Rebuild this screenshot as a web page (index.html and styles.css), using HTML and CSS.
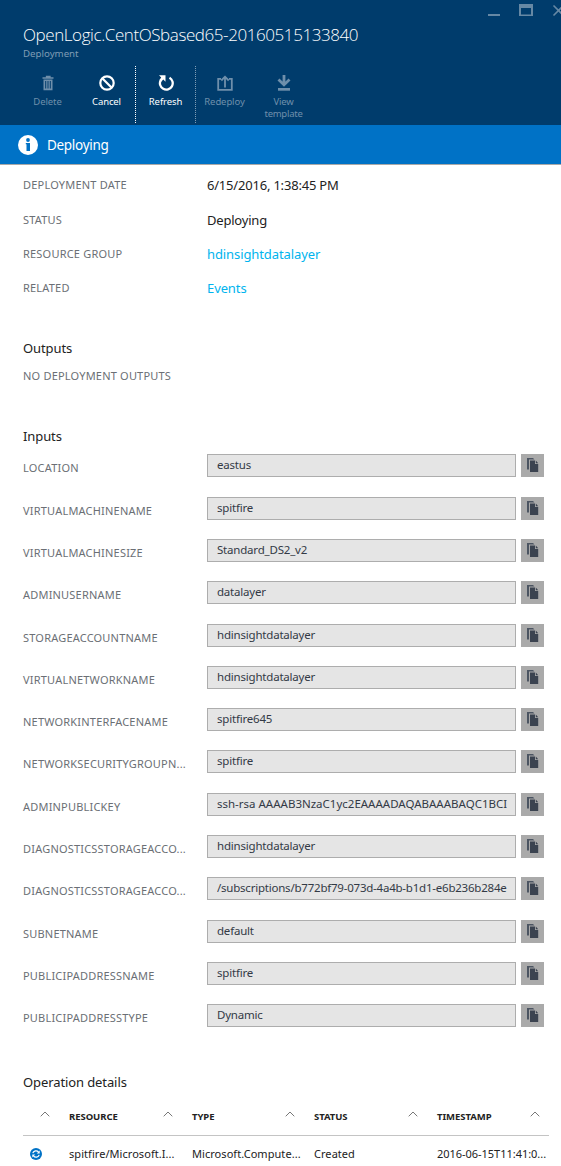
FILE: index.html
```html
<!DOCTYPE html>
<html lang="en">
<head>
<meta charset="utf-8">
<title>Deployment</title>
<link rel="stylesheet" href="styles.css">
</head>
<body>
<svg width="0" height="0" class="defs">
  <symbol id="copy" viewBox="0 0 12 14"><path fill="#4c5562" d="M0 0h6l1.500 1.500H2v10H0z"/><path fill="#3b4350" d="M3 2.500h5v3.500h3.200V14H3z"/><path fill="#3b4350" d="M8.800 2.500 11.200 5.200H8.800z"/></symbol>
  <symbol id="up" viewBox="0 0 10 6"><path d="M.7 5.300 5 1l4.300 4.300" fill="none" stroke="#777" stroke-width="1"/></symbol>
</svg>
<header class="head">
  <div class="win">
    <svg width="80" height="20" viewBox="0 0 80 20"><path d="M7 15h12" stroke="#6688a4" stroke-width="2"/><path d="M38 4h14v12H38zM40 8v6.500h10V8z" fill="#6688a4" fill-rule="evenodd"/><path d="m72.500 5.500 10 10m0-10-10 10" stroke="#6688a4" stroke-width="1.600"/></svg>
  </div>
  <h1 class="title">OpenLogic.CentOSbased65-20160515133840</h1>
  <div class="sub">Deployment</div>
  <nav class="tools">
    <div class="tool off"><svg viewBox="0 0 16 16"><path d="M2.500 3h11M6.500 2.500V1.500h3.500v1" fill="none" stroke="currentColor" stroke-width="1.300"/><path d="M3.500 4.500h9v10.700h-9zM5.200 6v7.500h1V6zM7.500 6v7.500h1V6zM9.800 6v7.500h1V6z" fill="currentColor" fill-rule="evenodd"/></svg><span>Delete</span></div>
    <div class="tool"><svg viewBox="0 0 16 16"><g fill="none" stroke="currentColor" stroke-width="2.200"><circle cx="8" cy="8" r="6.700"/><path d="m3.500 3.500 9 9"/></g></svg><span>Cancel</span></div>
    <div class="tool marked"><svg viewBox="0 0 16 16"><path d="M11.500 2.700A6.400 6.400 0 1 1 2.700 5.200" fill="none" stroke="currentColor" stroke-width="2.300"/><path d="M1 .3h6.500v6.500L5.300 4.600 3.200 6.700 1.400 4.900 3.200 2.500z" fill="currentColor"/></svg><span>Refresh</span></div>
    <div class="tool off"><svg viewBox="0 0 16 16"><path d="M4 3.800H1.200v11h13.600v-11H12M8 12.500V2M4.300 5.500 8 1.700l3.700 3.800" fill="none" stroke="currentColor" stroke-width="1.800"/></svg><span>Redeploy</span></div>
    <div class="tool off"><svg viewBox="0 0 16 16"><path d="M8 0v9M2.500 4.500 8 9.900l5.500-5.400" fill="none" stroke="currentColor" stroke-width="2.800"/><path d="M2 13h12v2.700H2z" fill="currentColor"/></svg><span>View template</span></div>
  </nav>
</header>
<div class="banner"><svg width="20" height="20" viewBox="0 0 20 20"><circle cx="10" cy="10" r="10" fill="#fff"/><circle cx="10" cy="5" r="1.900" fill="#0072c6"/><path d="M7.800 8H12v8H8.500V9.300h-.7z" fill="#0072c6"/></svg><span>Deploying</span></div>
<main class="main">
  <dl class="facts">
    <div class="fact"><dt class="label">DEPLOYMENT DATE</dt><dd>6/15/2016, 1:38:45 PM</dd></div>
    <div class="fact"><dt class="label">STATUS</dt><dd>Deploying</dd></div>
    <div class="fact third"><dt class="label">RESOURCE GROUP</dt><dd class="link">hdinsightdatalayer</dd></div>
    <div class="fact last"><dt class="label">RELATED</dt><dd class="link">Events</dd></div>
  </dl>
  <h2 class="h outputs">Outputs</h2>
  <p class="label none">NO DEPLOYMENT OUTPUTS</p>
  <h2 class="h inputs">Inputs</h2>
  <section class="fields">
    <div class="field"><span class="label">LOCATION</span><div class="box"><span>eastus</span></div><div class="copy"><svg><use href="#copy"/></svg></div></div>
    <div class="field"><span class="label">VIRTUALMACHINENAME</span><div class="box"><span>spitfire</span></div><div class="copy"><svg><use href="#copy"/></svg></div></div>
    <div class="field"><span class="label">VIRTUALMACHINESIZE</span><div class="box"><span>Standard_DS2_v2</span></div><div class="copy"><svg><use href="#copy"/></svg></div></div>
    <div class="field"><span class="label">ADMINUSERNAME</span><div class="box"><span>datalayer</span></div><div class="copy"><svg><use href="#copy"/></svg></div></div>
    <div class="field"><span class="label">STORAGEACCOUNTNAME</span><div class="box"><span>hdinsightdatalayer</span></div><div class="copy"><svg><use href="#copy"/></svg></div></div>
    <div class="field"><span class="label">VIRTUALNETWORKNAME</span><div class="box"><span>hdinsightdatalayer</span></div><div class="copy"><svg><use href="#copy"/></svg></div></div>
    <div class="field"><span class="label">NETWORKINTERFACENAME</span><div class="box"><span>spitfire645</span></div><div class="copy"><svg><use href="#copy"/></svg></div></div>
    <div class="field"><span class="label">NETWORKSECURITYGROUPN...</span><div class="box"><span>spitfire</span></div><div class="copy"><svg><use href="#copy"/></svg></div></div>
    <div class="field"><span class="label">ADMINPUBLICKEY</span><div class="box"><span class="key">ssh-rsa AAAAB3NzaC1yc2EAAAADAQABAAABAQC1BCI</span></div><div class="copy"><svg><use href="#copy"/></svg></div></div>
    <div class="field"><span class="label">DIAGNOSTICSSTORAGEACCO...</span><div class="box"><span>hdinsightdatalayer</span></div><div class="copy"><svg><use href="#copy"/></svg></div></div>
    <div class="field"><span class="label">DIAGNOSTICSSTORAGEACCO...</span><div class="box"><span class="path">/subscriptions/b772bf79-073d-4a4b-b1d1-e6b236b284e</span></div><div class="copy"><svg><use href="#copy"/></svg></div></div>
    <div class="field"><span class="label">SUBNETNAME</span><div class="box"><span>default</span></div><div class="copy"><svg><use href="#copy"/></svg></div></div>
    <div class="field"><span class="label">PUBLICIPADDRESSNAME</span><div class="box"><span>spitfire</span></div><div class="copy"><svg><use href="#copy"/></svg></div></div>
    <div class="field"><span class="label">PUBLICIPADDRESSTYPE</span><div class="box"><span>Dynamic</span></div><div class="copy"><svg><use href="#copy"/></svg></div></div>
  </section>
  <h2 class="h ops">Operation details</h2>
  <div class="table">
    <div class="row thead">
      <div class="cell"><svg class="up"><use href="#up"/></svg></div>
      <div class="cell"><b>RESOURCE</b><svg class="up"><use href="#up"/></svg></div>
      <div class="cell"><b>TYPE</b><svg class="up"><use href="#up"/></svg></div>
      <div class="cell"><b>STATUS</b><svg class="up"><use href="#up"/></svg></div>
      <div class="cell"><b>TIMESTAMP</b><svg class="up"><use href="#up"/></svg></div>
    </div>
    <div class="row">
      <div class="cell sync"><svg width="12" height="12" viewBox="0 0 12 12"><circle cx="6" cy="6" r="6" fill="#0072c6"/><path d="M2.800 5.200A3.300 3.300 0 0 1 8.500 4M9.200 6.800A3.300 3.300 0 0 1 3.500 8" fill="none" stroke="#fff" stroke-width="1.200"/><path d="M9.700 2.500v3H6.800zM2.300 9.500v-3h2.900z" fill="#fff"/></svg></div>
      <div class="cell"><span>spitfire/Microsoft.I...</span></div>
      <div class="cell"><span>Microsoft.Compute...</span></div>
      <div class="cell"><span>Created</span></div>
      <div class="cell"><span class="stamp">2016-06-15T11:41:0...</span></div>
    </div>
  </div>
</main>
</body>
</html>
```
FILE: styles.css
```css
* { box-sizing: border-box; }
body { margin: 0; width: 561px; height: 1166px; overflow: hidden; background: #fff; color: #222; font: 13px/18px "Noto Sans", "Open Sans", sans-serif; white-space: nowrap; }
h1, h2, p, dl, dd { margin: 0; font-weight: 400; }
.defs { position: absolute; }
.head { height: 125px; background: #003c6c; color: #fff; overflow: hidden; }
.win { height: 24px; display: flex; justify-content: flex-end; }
.title { margin-left: 23px; font: 300 17px/22px "Open Sans", "Noto Sans", sans-serif; letter-spacing: -.42px; }
.sub { margin-left: 23px; height: 20px; font-size: 9.700px; line-height: 15px; color: #7f9db5; }
.tools { display: flex; height: 57px; margin-left: 18px; }
.tool { width: 59px; padding: 9px 10px 0; display: flex; flex-direction: column; align-items: center; font-size: 9.500px; line-height: 12px; text-align: center; white-space: normal; letter-spacing: -.1px; }
.tool svg { width: 16px; height: 16px; flex: none; margin-bottom: 5px; }
.tool.off { color: #6f8fab; }
.tool:last-child span { letter-spacing: -.25px; }
.marked { width: 61px; margin: 0 -1px; border-left: 1px dotted #fff; border-right: 1px dotted #7f9db5; }
.banner { height: 40px; background: #0072c6; border-bottom: 1px solid #a8a8a8; color: #fff; display: flex; align-items: center; gap: 9px; padding-left: 18px; font-size: 13.500px; letter-spacing: -.3px; }
.banner span { padding-top: 1px; }
.main { padding-left: 23px; }
.facts { padding-top: 2px; }
.fact { display: flex; height: 35px; align-items: center; }
.fact.third { height: 34px; }
.fact.last { height: 33px; }
.fact dd { letter-spacing: -.2px; }
.fact .link { letter-spacing: -.1px; color: #00b4ee; }
.label { width: 184px; flex: none; font-size: 11px; letter-spacing: .2px; color: #6b6f75; }
.h { font-size: 13px; line-height: 18px; letter-spacing: -.1px; }
.outputs { margin-top: 35px; }
.none { margin-top: 10px; }
.inputs { margin-top: 42px; }
.fields { padding-top: 9.400px; }
.field { height: 42.300px; display: flex; align-items: flex-start; }
.field .label { padding-top: 5px; }
.box { width: 309px; height: 23px; border: 1px solid #adadad; background: #e5e5e5; padding: 0 8px 0 9px; font-size: 11.500px; line-height: 20.500px; letter-spacing: -.2px; color: #333a45; }
.box span { display: block; overflow: hidden; }
.box .key { letter-spacing: 0; }
.box .path { letter-spacing: -.22px; }
.copy { width: 23px; height: 23px; margin-left: 5px; background: #aaa; padding: 4px 0 0 6px; }
.copy svg { display: block; width: 12px; height: 14px; }
.ops { margin-top: 26.600px; }
.table { width: 526px; margin-top: 10px; }
.row { display: grid; grid-template-columns: 46px 123px 122px 123px 112px; height: 36px; }
.thead { height: 35px; border-bottom: 1px solid #c4c4c4; }
.cell { display: flex; justify-content: space-between; align-items: center; font-size: 11px; letter-spacing: .05px; padding-right: 18px; }
.thead .cell { padding: 0 19px 2px 0; font-size: 9.500px; letter-spacing: -.05px; }
.thead .cell:first-child { justify-content: flex-end; }
.thead .cell:last-child { padding-right: 9px; }
.cell:last-child { padding-right: 0; letter-spacing: -.03px; }
.up { width: 10px; height: 6px; margin-top: -6px; }
.sync { padding-left: 7px; }
```
